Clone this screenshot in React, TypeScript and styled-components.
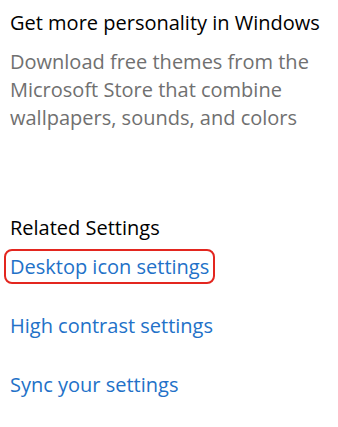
import React from "react";
import styled, { createGlobalStyle } from "styled-components";

const Global = createGlobalStyle`
  html, body { margin: 0; padding: 0; background: #ffffff; }
  body { font-family: "Open Sans", "Noto Sans", sans-serif; }
`;

const Page = styled.div`
  width: 338px;
  height: 427px;
  box-sizing: border-box;
  padding: 9px 0 0 10px;
  display: flex;
  flex-direction: column;
  background: #ffffff;
  overflow: hidden;
`;

const Section = styled.section<{ $gapTop?: number }>`
  display: flex;
  flex-direction: column;
  margin-top: ${(p) => p.$gapTop ?? 0}px;
`;

const Heading = styled.h2`
  margin: 0;
  font-size: 20px;
  font-weight: 400;
  line-height: 28px;
  color: #000000;
`;

const Description = styled.p`
  margin: 11px 0 0;
  font-size: 20px;
  font-weight: 400;
  line-height: 28px;
  color: #707070;
  max-width: 315px;
`;

const LinkList = styled.div`
  display: flex;
  flex-direction: column;
  align-items: flex-start;
  gap: 24px;
  margin-top: 7px;
  margin-left: -6px;
`;

const SettingsLink = styled.a<{ $highlighted?: boolean }>`
  display: inline-block;
  padding: 2px 4px 1px;
  border: 2px solid ${(p) => (p.$highlighted ? "#e3261f" : "transparent")};
  border-radius: 8px;
  font-size: 20px;
  line-height: 28px;
  color: #2271c8;
  text-decoration: none;
  cursor: pointer;
`;

const links = [
  { label: "Desktop icon settings", highlighted: true },
  { label: "High contrast settings" },
  { label: "Sync your settings" },
];

export default function App() {
  return (
    <>
      <Global />
      <Page>
        <Section>
          <Heading>Get more personality in Windows</Heading>
          <Description>
            Download free themes from the Microsoft Store that combine
            wallpapers, sounds, and colors
          </Description>
        </Section>
        <Section $gapTop={82}>
          <Heading>Related Settings</Heading>
          <LinkList>
            {links.map((l) => (
              <SettingsLink key={l.label} $highlighted={l.highlighted}>
                {l.label}
              </SettingsLink>
            ))}
          </LinkList>
        </Section>
      </Page>
    </>
  );
}
